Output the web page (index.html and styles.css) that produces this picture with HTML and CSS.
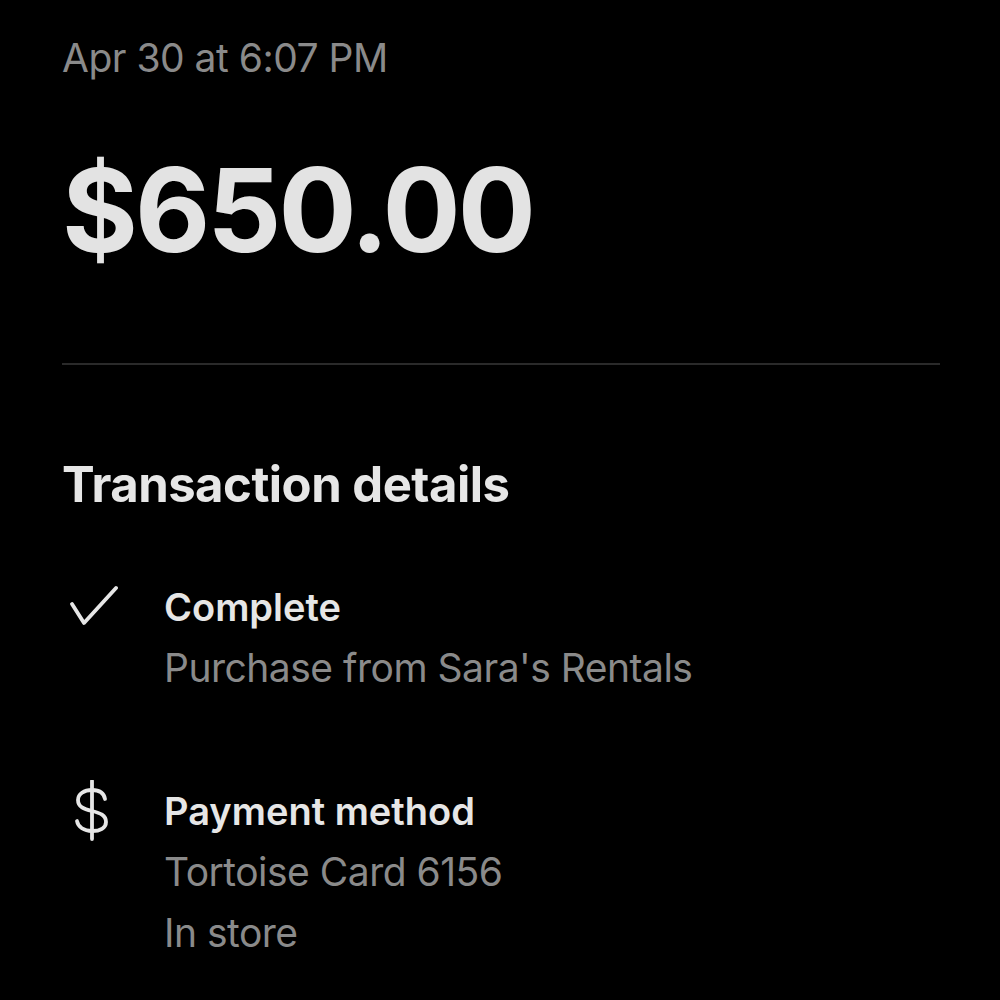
FILE: index.html
```html
<!DOCTYPE html>
<html lang="en">
<head>
    <meta charset="UTF-8">
    <meta name="viewport" content="width=device-width, initial-scale=1.0">
    <title>Transaction</title>
<link rel="stylesheet" href="styles.css">
</head>
<body>
    <div class="page">
        <p class="date">Apr 30 at 6:07 PM</p>
        <h1 class="amount">$650.00</h1>
        <hr class="divider">

        <h2 class="section-title">Transaction details</h2>

        <div class="detail">
            <div class="detail-icon">
                <svg width="56" height="56" viewBox="0 0 56 56">
                    <path d="M10 22 L22 41 L54 6" fill="none" stroke="#e6e6e6" stroke-width="3.8" stroke-linecap="round" stroke-linejoin="round"/>
                </svg>
            </div>
            <div class="detail-text">
                <p class="detail-title">Complete</p>
                <p class="detail-sub">Purchase from Sara's Rentals</p>
            </div>
        </div>

        <div class="detail detail-payment">
            <div class="detail-icon icon-raised">
                <svg width="56" height="62" viewBox="0 0 56 62">
                    <path d="M30 1 V59" stroke="#e6e6e6" stroke-width="3.8" stroke-linecap="round"/>
                    <path d="M43 19 C42 13 37 10 30 10 C22 10 16 14 16 20 C16 27 22 29 30 31 C38 33 44 35 44 42 C44 48 38 51 30 51 C22 51 16 47 15 41" fill="none" stroke="#e6e6e6" stroke-width="3.8" stroke-linecap="round"/>
                </svg>
            </div>
            <div class="detail-text">
                <p class="detail-title">Payment method</p>
                <p class="detail-sub">Tortoise Card 6156</p>
                <p class="detail-sub">In store</p>
            </div>
        </div>
    </div>
</body>
</html>
```

FILE: styles.css
```css
body {
    margin: 0;
    background-color: #000;
    font-family: Inter, "Noto Sans", sans-serif;
    color: #e6e6e6;
}

p, h1, h2 {
    margin: 0;
}

.page {
    padding: 34px 60px 0 62px;
}

.date {
    font-size: 39px;
    line-height: 48px;
    color: #8a8a8a;
    letter-spacing: -0.5px;
}

.amount {
    margin-top: 58px;
    font-size: 116px;
    line-height: 140px;
    font-weight: 700;
    letter-spacing: -3px;
    color: #e3e3e3;
}

.divider {
    margin: 83px 0 0 0;
    border: none;
    height: 2px;
    background-color: #2a2a2a;
}

.section-title {
    margin-top: 92px;
    font-size: 49px;
    line-height: 56px;
    font-weight: 700;
    letter-spacing: -0.5px;
}

.detail {
    display: flex;
    margin-top: 69px;
}

.detail-payment {
    margin-top: 93px;
}

.detail-icon {
    width: 102px;
    flex-shrink: 0;
}

.detail-icon svg {
    display: block;
}

.icon-raised {
    margin-top: -6px;
}

.detail-title {
    font-size: 38px;
    line-height: 50px;
    font-weight: 600;
}

.detail-sub {
    margin-top: 11px;
    font-size: 39px;
    line-height: 50px;
    color: #8a8a8a;
    letter-spacing: -0.5px;
}
```
